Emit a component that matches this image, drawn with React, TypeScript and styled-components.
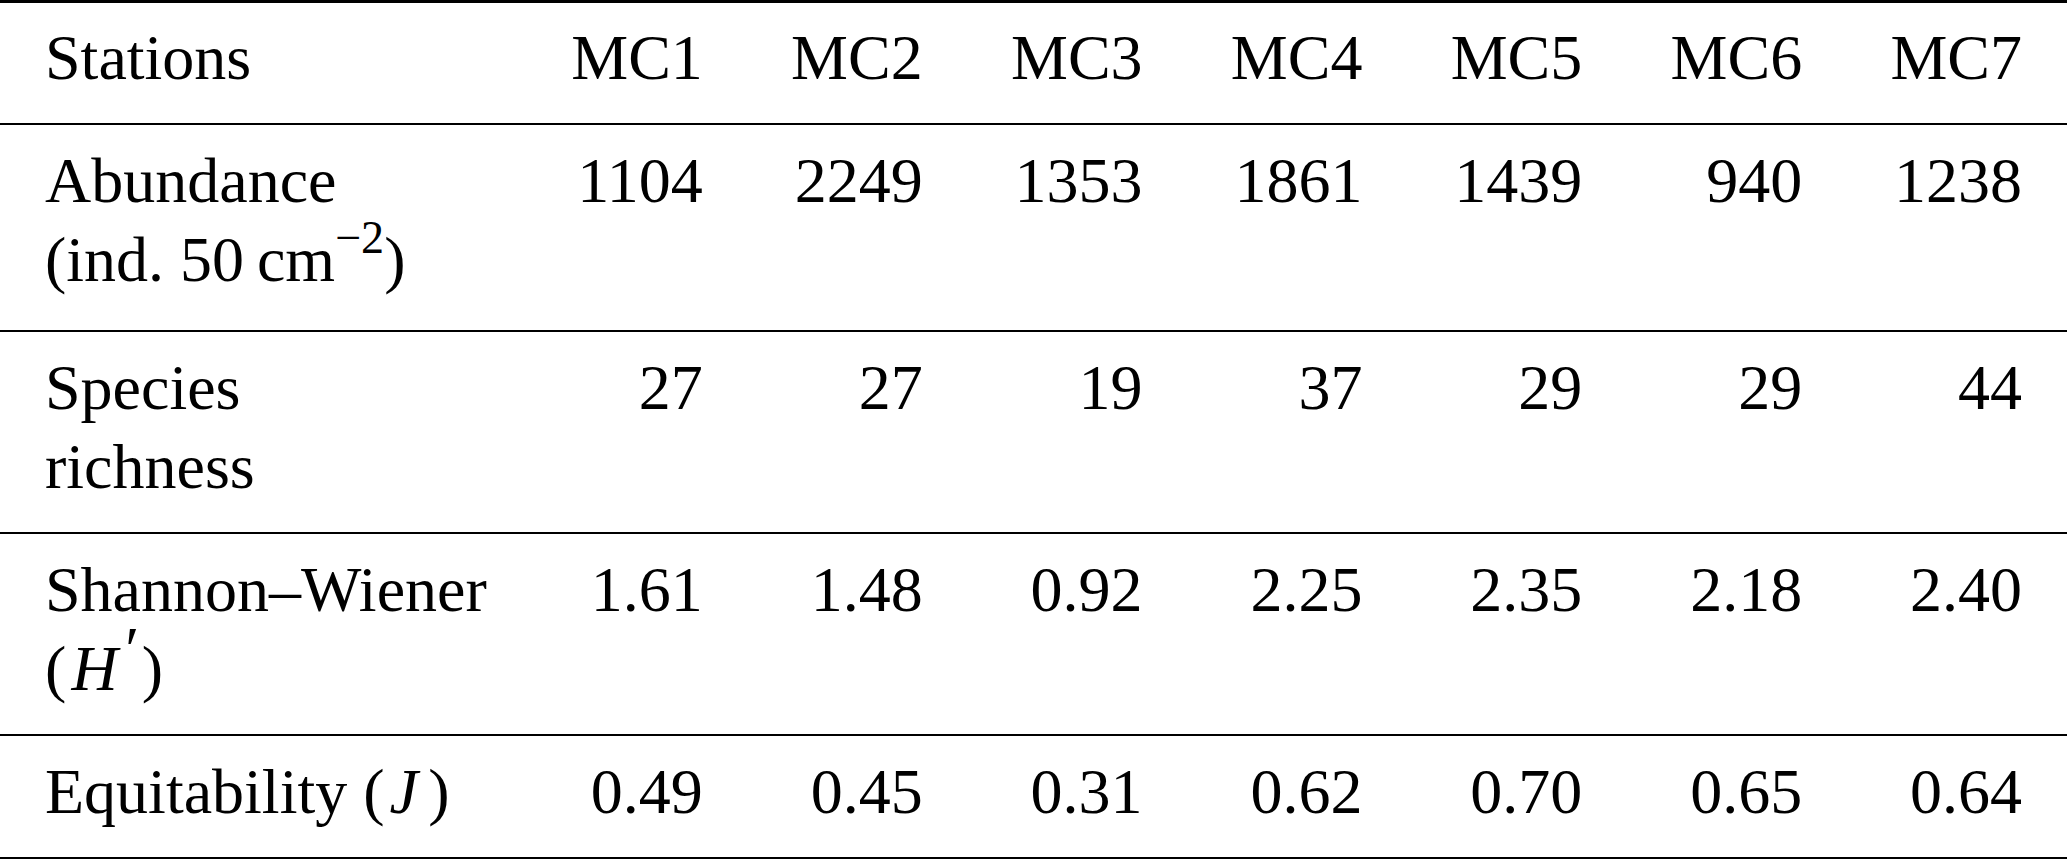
import React from 'react';
import styled, { createGlobalStyle } from 'styled-components';

const GlobalStyle = createGlobalStyle`
  html, body {
    margin: 0;
    padding: 0;
    background: #ffffff;
  }
  body {
    font-family: 'Liberation Serif', 'Times New Roman', serif;
    color: #000000;
  }
`;

const Table = styled.div`
  width: 2067px;
  border-top: 3px solid #000;
  border-bottom: 3px solid #000;
  font-size: 64px;
  line-height: 79px;
`;

const TableRow = styled.div<{ $head?: boolean; $last?: boolean; $tall?: boolean }>`
  display: grid;
  grid-template-columns: 528px repeat(7, 1fr);
  padding: ${(p) => (p.$head ? '15px' : '16px')} 0 ${(p) => (p.$tall ? '31px' : '26px')};
  border-bottom: ${(p) => (p.$last ? 'none' : '2px solid #000')};
`;

const LabelCell = styled.div`
  padding-left: 45px;
  text-align: left;
  white-space: nowrap;
`;

const ValueCell = styled.div`
  padding-right: 45px;
  text-align: right;
  white-space: nowrap;
`;

const Line = styled.div`
  display: block;
`;

const Sup = styled.sup`
  font-size: 0.72em;
  line-height: 0;
  vertical-align: 0.6em;
`;

const MathVar = styled.i<{ $gap?: boolean }>`
  font-style: italic;
  margin-left: 0.08em;
  margin-right: ${(p) => (p.$gap ? '0.16em' : '0')};
`;

const Prime = styled.span`
  display: inline-block;
  font-size: 1em;
  line-height: 0;
  vertical-align: 0.3em;
  margin-left: 0.12em;
  margin-right: 0.04em;
`;

const stations = ['MC1', 'MC2', 'MC3', 'MC4', 'MC5', 'MC6', 'MC7'];

type Row = {
  label: React.ReactNode[];
  values: string[];
  tall?: boolean;
};

const rows: Row[] = [
  {
    label: [
      'Abundance',
      <>
        (ind. 50&#8201;cm<Sup>−2</Sup>)
      </>,
    ],
    values: ['1104', '2249', '1353', '1861', '1439', '940', '1238'],
    tall: true,
  },
  {
    label: ['Species', 'richness'],
    values: ['27', '27', '19', '37', '29', '29', '44'],
  },
  {
    label: [
      'Shannon–Wiener',
      <>
        (<MathVar>H</MathVar>
        <Prime>′</Prime>)
      </>,
    ],
    values: ['1.61', '1.48', '0.92', '2.25', '2.35', '2.18', '2.40'],
  },
  {
    label: [
      <>
        Equitability (<MathVar $gap>J</MathVar>)
      </>,
    ],
    values: ['0.49', '0.45', '0.31', '0.62', '0.70', '0.65', '0.64'],
  },
];

function App() {
  return (
    <>
      <GlobalStyle />
      <Table>
        <TableRow $head>
          <LabelCell>Stations</LabelCell>
          {stations.map((s) => (
            <ValueCell key={s}>{s}</ValueCell>
          ))}
        </TableRow>
        {rows.map((row, i) => (
          <TableRow key={i} $tall={row.tall} $last={i === rows.length - 1}>
            <LabelCell>
              {row.label.map((line, j) => (
                <Line key={j}>{line}</Line>
              ))}
            </LabelCell>
            {row.values.map((v, j) => (
              <ValueCell key={j}>{v}</ValueCell>
            ))}
          </TableRow>
        ))}
      </Table>
    </>
  );
}

export default App;
